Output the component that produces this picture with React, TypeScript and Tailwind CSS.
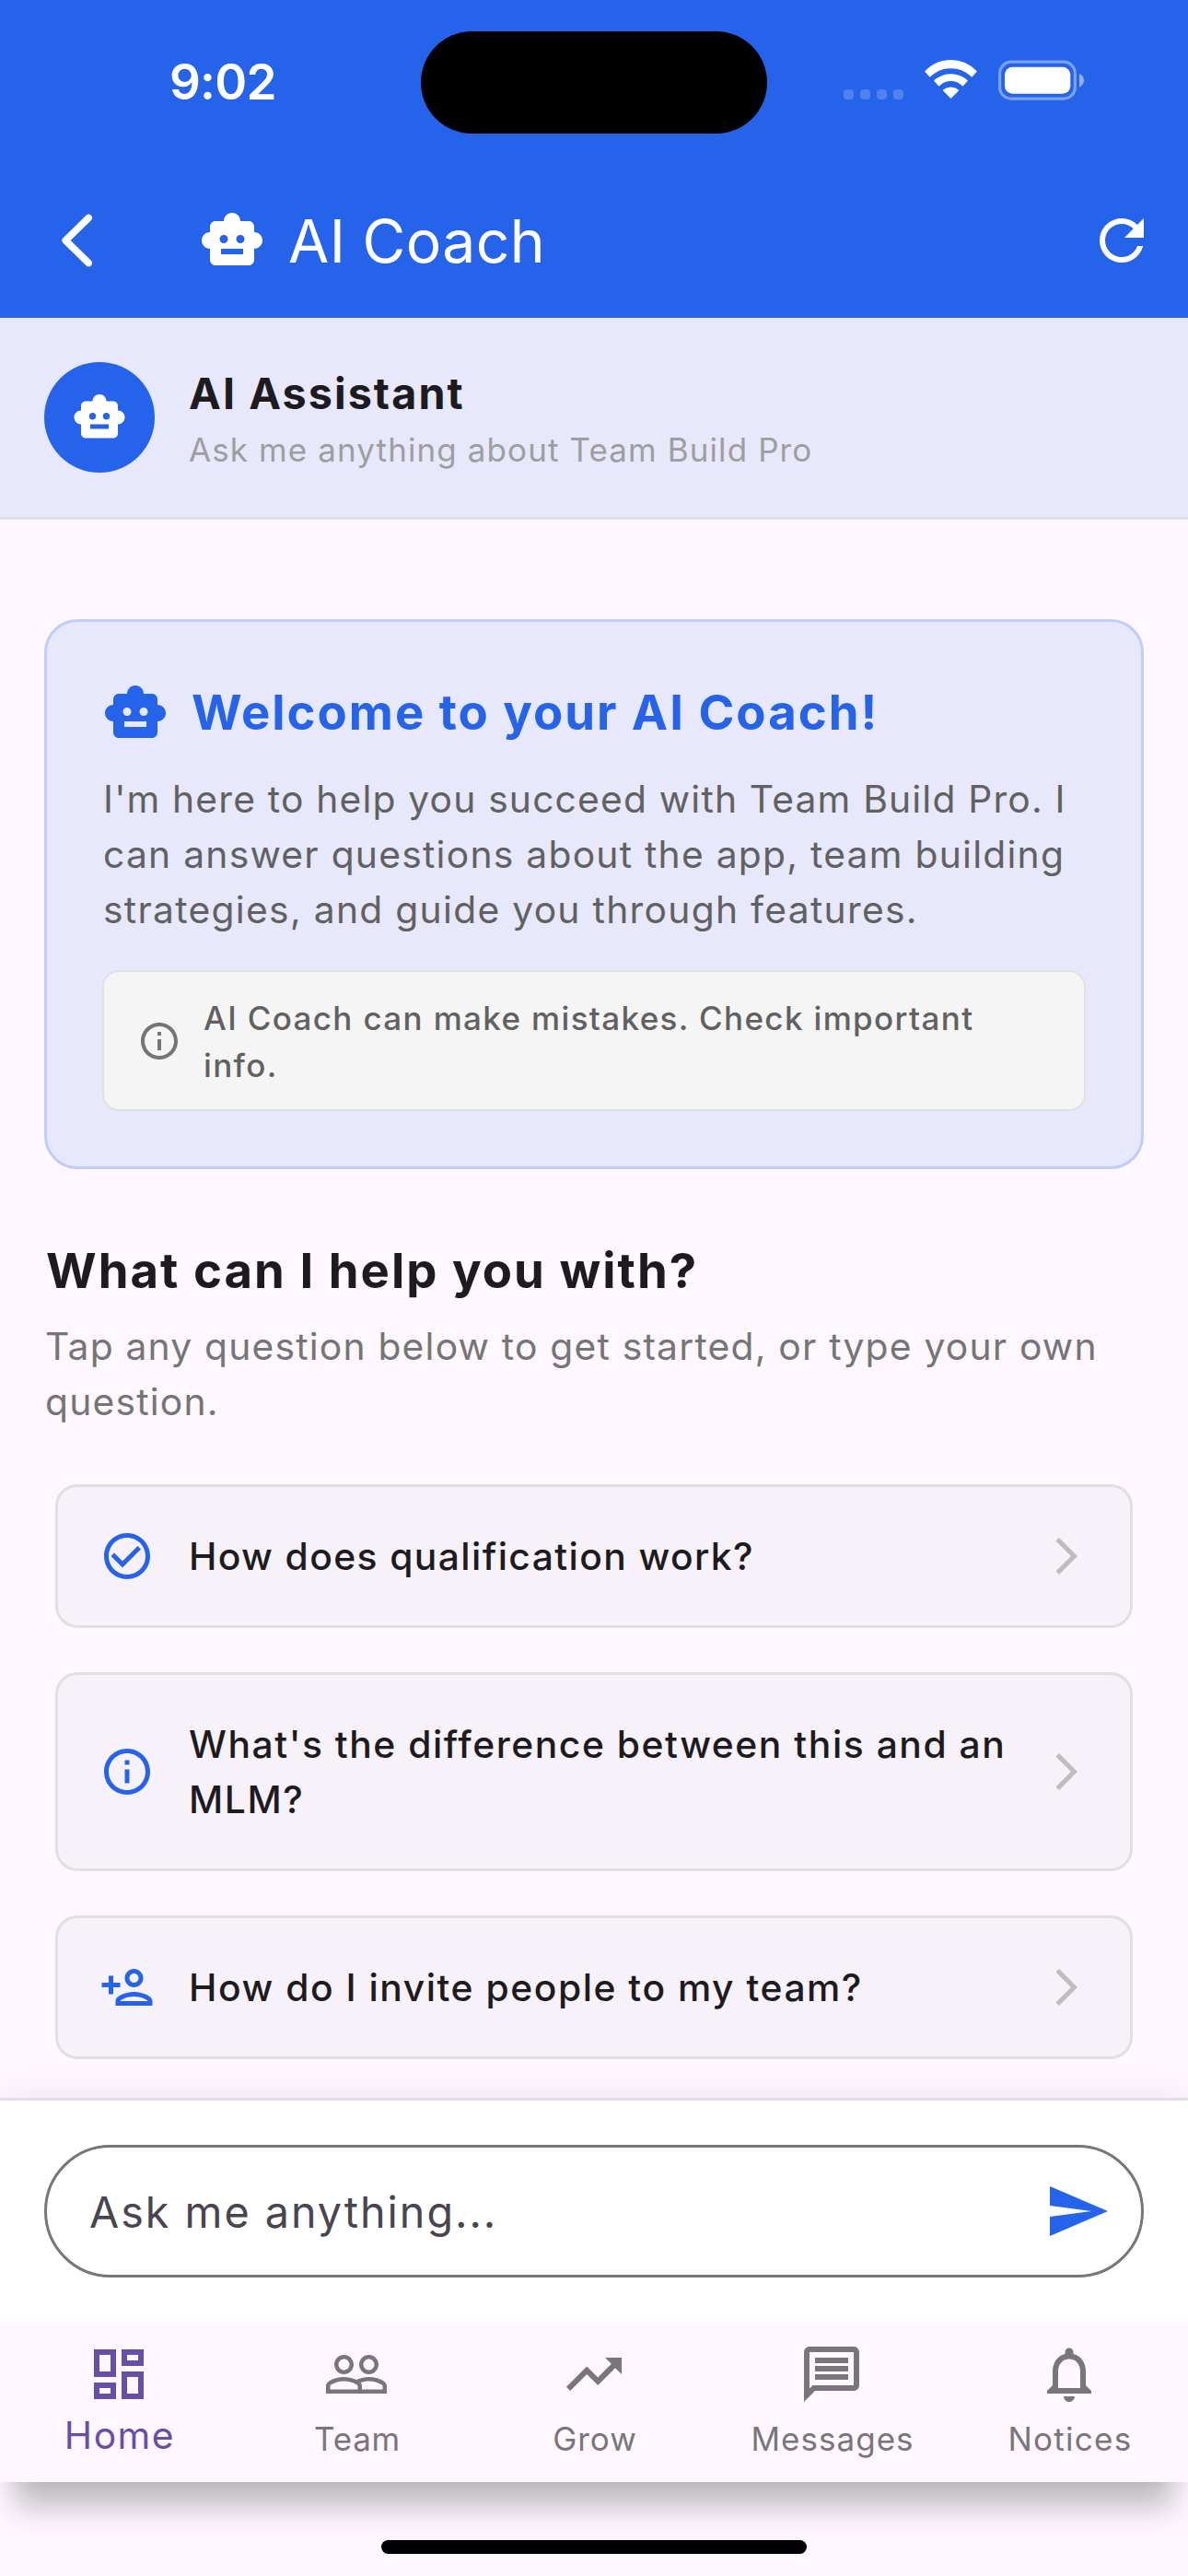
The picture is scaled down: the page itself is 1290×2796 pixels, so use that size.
import type { ReactNode } from "react";
import type { IconType } from "react-icons";
import {
  MdArrowForwardIos,
  MdInfoOutline,
  MdNotificationsNone,
  MdOutlineDashboard,
  MdOutlineMessage,
  MdOutlinePersonAdd,
  MdPeopleOutline,
  MdRefresh,
  MdSend,
  MdSmartToy,
  MdTrendingUp,
} from "react-icons/md";

function StatusBar() {
  return (
    <div className="flex h-[177px] items-start pt-[33.5px]">
      <div className="flex h-[111px] items-center">
        <div className="ml-[184px] w-[273px] text-[53px] font-semibold leading-none tracking-[-0.79px]">9:02</div>
        <div className="h-[111px] w-[376px] rounded-full bg-black" />
        <div className="ml-[83px] mt-[26px] flex gap-[7px]">
          {[0, 1, 2, 3].map((i) => (
            <div key={i} className="size-[11px] rounded-[4px] bg-white/20" />
          ))}
        </div>
        <svg className="-mt-[6px] ml-[23px] h-[42px] w-[57px]" viewBox="0 0 172 127" fill="white" stroke="white" strokeWidth="4" strokeLinejoin="round">
          <path d="M3 38A114 114 0 0 1 169 38L155 54A99 99 0 0 0 17 54Z" />
          <path d="M33 68A80 80 0 0 1 139 68L125 84A54 54 0 0 0 47 84Z" />
          <path d="M62 100A38 38 0 0 1 110 100L86 124Z" />
        </svg>
        <svg className="-mt-[5px] ml-[23px] h-[44px] w-[94px]" viewBox="0 0 94 44" fill="white">
          <rect x="1.65" y="2.15" width="81.7" height="40" rx="12.5" fill="none" stroke="white" strokeOpacity="0.4" strokeWidth="3.2" />
          <rect x="7" y="7.8" width="71.3" height="29" rx="8.5" />
          <path d="M88 15v14.4c3-1.2 5-4 5-7.2s-2-6-5-7.2z" fillOpacity="0.5" />
        </svg>
      </div>
    </div>
  );
}

function AppBar() {
  return (
    <div className="flex h-[168px] items-center pl-[48px] pr-[36px]">
      <svg className="size-[72px]" viewBox="0 0 72 72" fill="none" stroke="white" strokeWidth="7.6" strokeLinecap="round" strokeLinejoin="round">
        <path d="M48.2 11.5 23.2 36l25 24.5" />
      </svg>
      <MdSmartToy className="ml-[96px] size-[72px]" />
      <h1 className="ml-[25px] flex-1 pt-[2px] text-[64.2px] font-normal leading-none tracking-[0.34px]">AI Coach</h1>
      <MdRefresh className="size-[72px]" />
    </div>
  );
}

function AssistantBanner() {
  return (
    <div className="flex h-[219px] items-center border-b-[3px] border-[#e0e0e0] bg-[#e7e8fc] pl-[48px]">
      <div className="flex size-[120px] items-center justify-center rounded-full bg-[#2563eb]">
        <MdSmartToy className="size-[60px] text-white" />
      </div>
      <div className="ml-[37px]">
        <div className="text-[46.7px] font-bold leading-[70px] tracking-[2.05px] text-[#1d1b20]">AI Assistant</div>
        <div className="text-[35px] leading-[52px] tracking-[1.1px] text-[#9e9e9e]">Ask me anything about Team Build Pro</div>
      </div>
    </div>
  );
}

function WelcomeCard() {
  return (
    <section className="rounded-[36px] border-[3px] border-[#bfcdfa] bg-[#e7e8fc] p-[60px]">
      <div className="flex h-[78px] items-center">
        <MdSmartToy className="size-[72px] text-[#2563eb]" />
        <h2 className="ml-[25px] whitespace-nowrap pb-[2px] text-[52.7px] font-bold leading-[76px] tracking-[1.97px] text-[#2563eb]">
          Welcome to your AI Coach!
        </h2>
      </div>
      <p className="mt-[24px] whitespace-nowrap pl-[1px] text-[40.8px] leading-[60px] text-[#616161]">
        <span className="tracking-[1.17px]">I'm here to help you succeed with Team Build Pro. I</span>
        <br />
        <span className="tracking-[1.24px]">can answer questions about the app, team building</span>
        <br />
        <span className="tracking-[1.28px]">strategies, and guide you through features.</span>
      </p>
      <div className="mt-[36px] flex h-[153px] items-center rounded-[18px] border-2 border-[#e0e0e0] bg-[#f5f5f5] pl-[36px]">
        <MdInfoOutline className="size-[48px] text-[#757575]" />
        <p className="ml-[24px] whitespace-nowrap pt-[2px] text-[35px] font-medium leading-[51px] tracking-[1.35px] text-[#616161]">
          AI Coach can make mistakes. Check important
          <br />
          info.
        </p>
      </div>
    </section>
  );
}

function CheckCircle({ className }: { className?: string }) {
  return (
    <svg className={className} viewBox="0 0 24 24" fill="currentColor">
      <path d="M16.59 7.58 10 14.17l-3.59-3.58L5 12l5 5 8-8zM12 2C6.48 2 2 6.48 2 12s4.48 10 10 10 10-4.48 10-10S17.52 2 12 2zm0 18c-4.42 0-8-3.58-8-8s3.58-8 8-8 8 3.58 8 8-3.58 8-8 8z" />
    </svg>
  );
}

function QuestionCard({ icon, className, children }: { icon: ReactNode; className: string; children: ReactNode }) {
  return (
    <div className={`flex items-center rounded-[24px] border-[3px] border-[#e0e0e0] bg-[#f7f2f9] px-[45px] text-[#2563eb] ${className}`}>
      {icon}
      <p className="ml-[37px] flex-1 whitespace-nowrap text-[40.8px] font-medium leading-[60px] text-[#1d1b20]">{children}</p>
      <MdArrowForwardIos className="size-[48px] text-[#bdbdbd]" />
    </div>
  );
}

function InputBar() {
  return (
    <div className="relative h-[243px] border-t-[3px] border-[#e0e0e0] bg-white px-[48px] pt-[48px] shadow-[0_-6px_36px_rgba(0,0,0,0.06)]">
      <div className="flex h-[144px] items-center rounded-full border-[3px] border-[#79747e] pl-[46px] pr-[33px]">
        <span className="flex-1 pt-[1px] text-[46.7px] leading-[72px] tracking-[1.98px] text-[#49454f]">Ask me anything...</span>
        <MdSend className="size-[72px] text-[#2563eb]" />
      </div>
    </div>
  );
}

const tabs: { label: string; Icon: IconType; tracking: string }[] = [
  { label: "Home", Icon: MdOutlineDashboard, tracking: "tracking-[1.5px]" },
  { label: "Team", Icon: MdPeopleOutline, tracking: "tracking-[0.75px]" },
  { label: "Grow", Icon: MdTrendingUp, tracking: "tracking-[1px]" },
  { label: "Messages", Icon: MdOutlineMessage, tracking: "tracking-[1.02px]" },
  { label: "Notices", Icon: MdNotificationsNone, tracking: "tracking-[1.27px]" },
];

function TabBar() {
  return (
    <nav className="relative grid h-[174px] grid-cols-5 bg-[#fef7ff] pt-[21px] shadow-[0_42px_32px_-16px_rgba(0,0,0,0.26),0_0_18px_rgba(0,0,0,0.02)]">
      {tabs.map(({ label, Icon, tracking }, i) => (
        <div key={label} className={`flex flex-col items-center ${i === 0 ? "text-[#6750a4]" : "text-[#7a757a]"}`}>
          <Icon className="size-[72px]" />
          <span className={`pl-[2px] ${tracking} ${i === 0 ? "text-[40.8px] leading-[60px]" : "text-[35px] leading-[68px]"}`}>{label}</span>
        </div>
      ))}
    </nav>
  );
}

export default function App() {
  return (
    <div className="flex h-[2796px] w-[1290px] flex-col overflow-hidden bg-[#fef7ff] font-['Inter',sans-serif]">
      <header className="bg-[#2563eb] text-white">
        <StatusBar />
        <AppBar />
      </header>
      <AssistantBanner />
      <main className="min-h-0 flex-1 px-[48px] pt-[108px]">
        <WelcomeCard />
        <h2 className="mt-[71px] pl-[2px] text-[52.7px] font-bold leading-[78px] tracking-[2.02px] text-[#1d1b20]">What can I help you with?</h2>
        <p className="mt-[13px] whitespace-nowrap pl-[1px] text-[40.8px] leading-[60px] tracking-[1.19px] text-[#757575]">
          Tap any question below to get started, or type your own
          <br />
          question.
        </p>
        <div className="mt-[60px] flex flex-col gap-[48px] px-[12px]">
          <QuestionCard className="h-[156px]" icon={<CheckCircle className="size-[60px]" />}>
            <span className="tracking-[1.39px]">How does qualification work?</span>
          </QuestionCard>
          <QuestionCard className="h-[216px]" icon={<MdInfoOutline className="size-[60px]" />}>
            <span className="tracking-[1.54px]">
              What's the difference between this and an
              <br />
              MLM?
            </span>
          </QuestionCard>
          <QuestionCard className="h-[156px]" icon={<MdOutlinePersonAdd className="size-[60px]" />}>
            <span className="tracking-[1.53px]">How do I invite people to my team?</span>
          </QuestionCard>
        </div>
      </main>
      <InputBar />
      <TabBar />
      <footer className="flex h-[102px] justify-center pt-[63px]">
        <div className="relative h-[15px] w-[462px] rounded-full bg-black" />
      </footer>
    </div>
  );
}
